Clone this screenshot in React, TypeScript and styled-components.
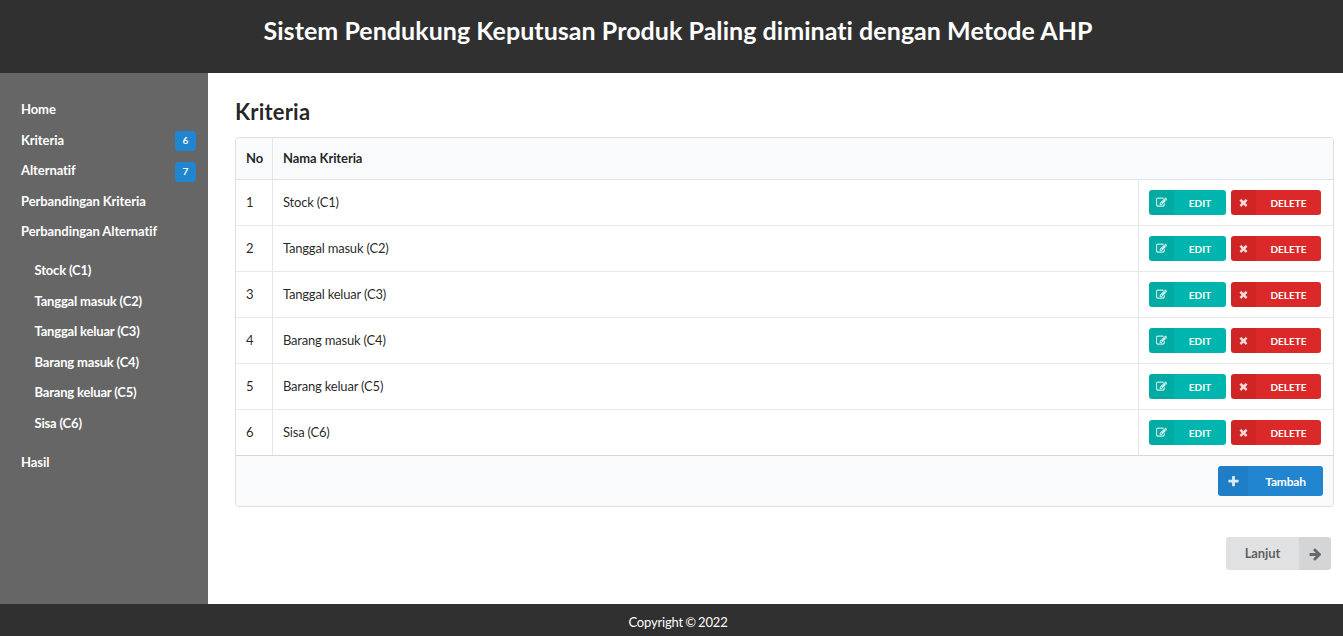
import React from 'react';
import styled, { createGlobalStyle } from 'styled-components';

const GlobalStyle = createGlobalStyle`
  * { box-sizing: border-box; }
  body {
    margin: 0;
    background: #fff;
    color: rgba(0, 0, 0, 0.87);
    font-family: Lato, 'Liberation Sans', sans-serif;
    font-size: 13px;
    line-height: 18px;
    font-variant-ligatures: none;
  }
`;

const Page = styled.div`
  display: flex;
  flex-direction: column;
  height: 636px;
  overflow: hidden;
`;

const Header = styled.header`
  height: 73px;
  flex: none;
  background: #303030;
  color: #fff;
  text-align: center;
  padding: 14px 0 0 13px;
`;

const Title = styled.h1`
  margin: 0;
  font-size: 25px;
  line-height: 33px;
  font-weight: 700;
  letter-spacing: 0.045px;
`;

const Body = styled.div`
  display: flex;
  flex: 1;
  min-height: 0;
`;

const Sidebar = styled.nav`
  width: 208px;
  flex: none;
  background: #666;
  padding: 21px 12px 0 21px;
`;

const MenuItem = styled.a`
  display: flex;
  align-items: center;
  justify-content: space-between;
  height: 30.5px;
  color: #fff;
  font-weight: 700;
  letter-spacing: -0.08px;
`;

const SubMenu = styled.div`
  padding: 8.5px 0 8.5px 13.5px;

  ${MenuItem} {
    letter-spacing: -0.18px;
  }
`;

const Badge = styled.span`
  width: 21px;
  height: 20px;
  margin-top: 3px;
  border-radius: 3px;
  background: #2185d0;
  font-size: 10px;
  line-height: 19px;
  text-align: center;
  letter-spacing: 0;
`;

const Main = styled.main`
  flex: 1;
  padding: 26px 9px 0 27px;
`;

const Heading = styled.h2`
  margin: 0 0 12px;
  font-size: 22px;
  line-height: 26px;
  font-weight: 700;
  letter-spacing: 0.2px;
`;

const Table = styled.section`
  border: 1px solid #dededf;
  border-radius: 4px;
  overflow: hidden;
`;

const Row = styled.div<{ $head?: boolean }>`
  display: grid;
  grid-template-columns: ${(p) => (p.$head ? '36px 1fr' : '36px 1fr 195px')};
  height: ${(p) => (p.$head ? '42px' : '46px')};
  border-bottom: 1px solid ${(p) => (p.$head ? '#e1e2e3' : '#e9e9e9')};
  background: ${(p) => (p.$head ? '#f9fafb' : '#fff')};
  font-weight: ${(p) => (p.$head ? 700 : 400)};
  letter-spacing: ${(p) => (p.$head ? '-0.1px' : '-0.2px')};

  &:nth-last-child(2) {
    border-bottom-color: #d4d5d6;
  }
`;

const Cell = styled.div`
  display: flex;
  align-items: center;
  gap: 5px;
  padding: 0 9px 2px 10px;

  & + & {
    border-left: 1px solid #e6e6e7;
  }
`;

const ActionCell = styled(Cell)`
  padding-bottom: 0;
`;

const TableFoot = styled.div`
  display: flex;
  justify-content: flex-end;
  height: 50px;
  padding: 10px 10px 0 0;
  background: #f9fafb;
`;

type Tone = 'teal' | 'red' | 'blue' | 'grey';
const tones: Record<Tone, string> = {
  teal: '#00b5ad',
  red: '#db2828',
  blue: '#2185d0',
  grey: '#e0e1e2',
};

const Button = styled.button<{ $tone: Tone; $w: number; $h: number; $size: number; $right?: boolean }>`
  display: flex;
  flex-direction: ${(p) => (p.$right ? 'row-reverse' : 'row')};
  width: ${(p) => p.$w}px;
  height: ${(p) => p.$h}px;
  padding: 0;
  border: 0;
  border-radius: 3px;
  overflow: hidden;
  background: ${(p) => tones[p.$tone]};
  color: ${(p) => (p.$tone === 'grey' ? 'rgba(0, 0, 0, 0.6)' : '#fff')};
  font-family: inherit;
  font-size: ${(p) => p.$size}px;
  line-height: 1;
  font-weight: 700;
  letter-spacing: ${(p) => (p.$size > 12 ? '-0.1px' : p.$size > 11 ? '-0.2px' : '0')};
`;

const ButtonIcon = styled.span<{ $w: number; $drop?: number }>`
  display: flex;
  align-items: center;
  justify-content: center;
  width: ${(p) => p.$w}px;
  height: 100%;
  padding-top: ${(p) => p.$drop ?? 0}px;
  background: rgba(0, 0, 0, 0.05);

  svg {
    fill: currentColor;
    stroke: currentColor;
    opacity: 0.85;
  }
`;

const ButtonLabel = styled.span<{ $drop?: number }>`
  flex: 1;
  align-self: center;
  padding-top: ${(p) => p.$drop ?? 0}px;
  text-align: center;
`;

const NextRow = styled.div`
  display: flex;
  justify-content: flex-end;
  padding: 30px 3px 0 0;
`;

const Footer = styled.footer`
  height: 32px;
  flex: none;
  padding: 9px 0 0 13px;
  background: #303030;
  color: #fff;
  text-align: center;
  letter-spacing: -0.16px;
  word-spacing: -1px;
`;

const icons = {
  edit: 'M888 1184l116-116-152-152-116 116v56h96v96h56zm440-720q-16-16-33 1l-350 350q-17 17-1 33t33-1l350-350q17-17 1-33zm80 594v190q0 119-84.5 203.5t-203.5 84.5h-832q-119 0-203.5-84.5t-84.5-203.5v-832q0-119 84.5-203.5t203.5-84.5h832q63 0 117 25 15 7 18 23 3 17-9 29l-49 49q-14 14-32 8-23-6-45-6h-832q-66 0-113 47t-47 113v832q0 66 47 113t113 47h832q66 0 113-47t47-113v-126q0-13 9-22l64-64q15-15 35-7t20 29zm-96-738l288 288-672 672h-288v-288zm444 132l-92 92-288-288 92-92q28-28 68-28t68 28l152 152q28 28 28 68t-28 68z',
  remove: 'M1490 1322q0 40-28 68l-136 136q-28 28-68 28t-68-28l-294-294-294 294q-28 28-68 28t-68-28l-136-136q-28-28-28-68t28-68l294-294-294-294q-28-28-28-68t28-68l136-136q28-28 68-28t68 28l294 294 294-294q28-28 68-28t68 28l136 136q28 28 28 68t-28 68l-294 294 294 294q28 28 28 68z',
  plus: 'M1600 736v192q0 40-28 68t-68 28h-416v416q0 40-28 68t-68 28h-192q-40 0-68-28t-28-68v-416h-416q-40 0-68-28t-28-68v-192q0-40 28-68t68-28h416v-416q0-40 28-68t68-28h192q40 0 68 28t28 68v416h416q40 0 68 28t28 68z',
  arrow: 'M1664 960q0 54-37 91l-651 651q-39 37-91 37-51 0-90-37l-75-75q-38-38-38-91t38-91l293-293h-704q-52 0-84.5-37.5t-32.5-90.5v-128q0-53 32.5-90.5t84.5-37.5h704l-293-294q-38-36-38-90t38-90l75-75q38-38 90-38 53 0 91 38l651 651q37 35 37 90z',
};

const Icon = ({ name, size, weight = 0 }: { name: keyof typeof icons; size: number; weight?: number }) => (
  <svg width={size} height={size} viewBox="0 0 1792 1792">
    <path d={icons[name]} strokeWidth={weight} />
  </svg>
);

const criteria = [
  'Stock (C1)',
  'Tanggal masuk (C2)',
  'Tanggal keluar (C3)',
  'Barang masuk (C4)',
  'Barang keluar (C5)',
  'Sisa (C6)',
];

export default function App() {
  return (
    <Page>
      <GlobalStyle />
      <Header>
        <Title>Sistem Pendukung Keputusan Produk Paling diminati dengan Metode AHP</Title>
      </Header>
      <Body>
        <Sidebar>
          <MenuItem>Home</MenuItem>
          <MenuItem>Kriteria<Badge>6</Badge></MenuItem>
          <MenuItem>Alternatif<Badge>7</Badge></MenuItem>
          <MenuItem>Perbandingan Kriteria</MenuItem>
          <MenuItem>Perbandingan Alternatif</MenuItem>
          <SubMenu>
            {criteria.map((name) => <MenuItem key={name}>{name}</MenuItem>)}
          </SubMenu>
          <MenuItem>Hasil</MenuItem>
        </Sidebar>
        <Main>
          <Heading>Kriteria</Heading>
          <Table>
            <Row $head>
              <Cell>No</Cell>
              <Cell>Nama Kriteria</Cell>
            </Row>
            {criteria.map((name, i) => (
              <Row key={name}>
                <Cell>{i + 1}</Cell>
                <Cell>{name}</Cell>
                <ActionCell>
                  <Button $tone="teal" $w={77} $h={25} $size={10}>
                    <ButtonIcon $w={25}><Icon name="edit" size={11} weight={60} /></ButtonIcon>
                    <ButtonLabel $drop={1}>EDIT</ButtonLabel>
                  </Button>
                  <Button $tone="red" $w={90} $h={25} $size={10}>
                    <ButtonIcon $w={25}><Icon name="remove" size={11} weight={60} /></ButtonIcon>
                    <ButtonLabel $drop={1}>DELETE</ButtonLabel>
                  </Button>
                </ActionCell>
              </Row>
            ))}
            <TableFoot>
              <Button $tone="blue" $w={105} $h={30} $size={12}>
                <ButtonIcon $w={30}><Icon name="plus" size={13} /></ButtonIcon>
                <ButtonLabel $drop={2}>Tambah</ButtonLabel>
              </Button>
            </TableFoot>
          </Table>
          <NextRow>
            <Button $tone="grey" $w={105} $h={33} $size={13} $right>
              <ButtonIcon $w={32} $drop={1}><Icon name="arrow" size={14} /></ButtonIcon>
              <ButtonLabel>Lanjut</ButtonLabel>
            </Button>
          </NextRow>
        </Main>
      </Body>
      <Footer>Copyright © 2022</Footer>
    </Page>
  );
}
